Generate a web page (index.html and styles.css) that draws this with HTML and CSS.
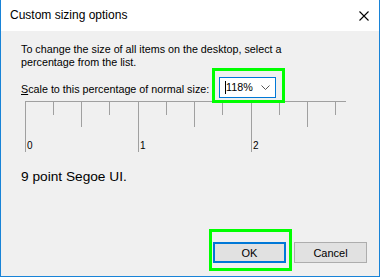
FILE: index.html
```html
<!DOCTYPE html>
<html>
<head>
<meta charset="utf-8">
<link rel="stylesheet" href="styles.css">
</head>
<body>
<div class="window">
  <div class="titlebar">
    <span class="title">Custom sizing options</span>
    <svg class="close" width="10" height="10" viewBox="0 0 10 10"><path d="M0.5 0.5L9.5 9.5M9.5 0.5L0.5 9.5" stroke="#000" stroke-width="1.1" fill="none"/></svg>
  </div>
  <div class="content">
    <p class="desc">To change the size of all items on the desktop, select a<br>percentage from the list.</p>
    <div class="scale-row">
      <label class="scale-label"><u>S</u>cale to this percentage of normal size:</label>
      <div class="hl hl-select">
        <div class="select"><span class="caret"></span><span class="value">118%</span>
          <svg class="chev" width="9" height="5" viewBox="0 0 9 5"><path d="M0.5 0.5L4.5 4.5L8.5 0.5" stroke="#555" stroke-width="1" fill="none"/></svg>
        </div>
      </div>
    </div>
    <svg class="ruler" width="322" height="52" viewBox="0 0 322 52">
      <g fill="#a0a0a0">
        <rect x="0" y="0" width="321" height="1"/>
        <rect x="0" y="0" width="1" height="51"/>
        <rect x="28" y="0" width="1" height="14"/>
        <rect x="56" y="0" width="1" height="26"/>
        <rect x="84" y="0" width="1" height="14"/>
        <rect x="113" y="0" width="1" height="51"/>
        <rect x="141" y="0" width="1" height="14"/>
        <rect x="169" y="0" width="1" height="26"/>
        <rect x="197" y="0" width="1" height="14"/>
        <rect x="226" y="0" width="1" height="51"/>
        <rect x="254" y="0" width="1" height="14"/>
        <rect x="282" y="0" width="1" height="26"/>
        <rect x="310" y="0" width="1" height="14"/>
      </g>
      <g class="ruler-num">
        <text x="2" y="48">0</text>
        <text x="115" y="48">1</text>
        <text x="228" y="48">2</text>
      </g>
    </svg>
    <p class="sample">9 point Segoe UI.</p>
    <div class="buttons">
      <div class="hl hl-ok"><button class="btn btn-default">OK</button></div>
      <button class="btn">Cancel</button>
    </div>
  </div>
</div>
</body>
</html>
```
FILE: styles.css
```css
html, body {
  margin: 0;
  padding: 0;
  background: #f0f0f0;
}
body {
  font-family: "Liberation Sans", Arial, sans-serif;
  color: #000;
}
.window {
  width: 380px;
  height: 277px;
  box-sizing: border-box;
  border-left: 1px solid #1883d7;
  border-right: 1px solid #1883d7;
  border-bottom: 1px solid #1883d7;
  background: #f0f0f0;
  display: flex;
  flex-direction: column;
}
.titlebar {
  height: 31px;
  flex: 0 0 31px;
  background: #fff;
  display: flex;
  align-items: center;
  justify-content: space-between;
  padding-left: 9px;
  padding-right: 10px;
}
.title {
  font-size: 12px;
  line-height: 15px;
}
.close {
  display: block;
}
.content {
  flex: 1;
  display: flex;
  flex-direction: column;
  padding: 0 12px 5px 20px;
}
.desc {
  margin: 12px 0 0 0;
  font-size: 10.75px;
  line-height: 13px;
}
.scale-row {
  display: flex;
  align-items: flex-start;
  position: relative;
  z-index: 1;
  height: 35px;
  margin-top: -1px;
}
.scale-label {
  font-size: 10.75px;
  line-height: 13px;
  margin-top: 15px;
  width: 191px;
  flex: 0 0 191px;
  white-space: nowrap;
}
.hl {
  border: 3px solid #00ff00;
  box-sizing: border-box;
}
.hl-select {
  padding: 6px 6px 2px 4px;
}
.select {
  width: 57px;
  height: 21px;
  box-sizing: border-box;
  border: 1px solid #0078d7;
  background: #fff;
  display: flex;
  align-items: center;
  padding-left: 5px;
  font-size: 10.75px;
}
.caret {
  display: inline-block;
  width: 1px;
  height: 13px;
  background: #000;
}
.value {
  line-height: 13px;
}
.chev {
  display: block;
  margin-left: auto;
  margin-right: 5px;
}
.ruler {
  display: block;
  margin: -2px 0 0 4px;
}
.ruler-num text {
  font-family: "Liberation Sans", Arial, sans-serif;
  font-size: 10px;
  fill: #000;
}
.sample {
  margin: 15px 0 0 0;
  font-size: 13.7px;
  line-height: 18px;
}
.buttons {
  margin-top: auto;
  display: flex;
  justify-content: flex-end;
  align-items: flex-end;
}
.hl-ok {
  padding: 10px 3px 5px 1px;
}
.btn {
  width: 73px;
  height: 21px;
  box-sizing: border-box;
  border: 1px solid #adadad;
  background: #e1e1e1;
  font-family: "Liberation Sans", Arial, sans-serif;
  font-size: 11px;
  color: #000;
  padding: 0;
  margin: 0 0 8px 2px;
  display: block;
}
.btn-default {
  border: 2px solid #0078d7;
  margin: 0;
}
```
